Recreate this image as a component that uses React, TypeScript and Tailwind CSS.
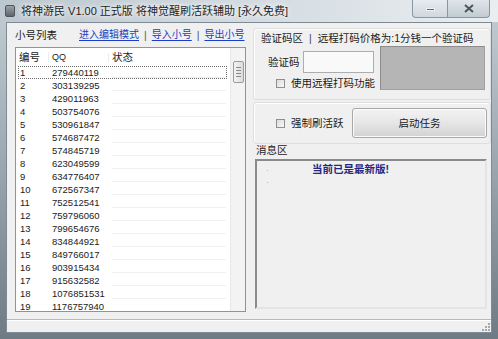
import React from 'react';

const rows: [number, string][] = [
    [1, '279440119'],
    [2, '303139295'],
    [3, '429011963'],
    [4, '503754076'],
    [5, '530961847'],
    [6, '574687472'],
    [7, '574845719'],
    [8, '623049599'],
    [9, '634776407'],
    [10, '672567347'],
    [11, '752512541'],
    [12, '759796060'],
    [13, '799654676'],
    [14, '834844921'],
    [15, '849766017'],
    [16, '903915434'],
    [17, '915632582'],
    [18, '1076851531'],
    [19, '1176757940'],
];

function CheckBox({ label }: { label: string }) {
    return (
        <div className="flex items-center gap-[6px]">
            <span className="w-[9px] h-[9px] border border-[#8f8f8f] bg-gradient-to-br from-[#dcdcdc] to-[#f8f8f8]" />
            <span>{label}</span>
        </div>
    );
}

export default function App() {
    return (
        <div className="w-[498px] h-[339px] flex flex-col bg-gradient-to-b from-[#c3cdd4] via-[#9aa6ae] to-[#6f7b84] font-['Liberation_Sans','Noto_Sans_CJK_SC',sans-serif] text-[10.5px] leading-none text-[#1b1b1b] overflow-hidden">
            {/* title bar */}
            <div className="h-[22px] flex items-start bg-gradient-to-r from-[#bcc7cf] via-[#d3dbe0] to-[#e9eef1]">
                <div className="mt-[5px] ml-[5px] w-[10px] h-[12px] rounded-[2px] bg-gradient-to-b from-[#9aa2a8] to-[#5e666c] border border-[#4f565b]" />
                <div className="mt-[6px] ml-[6px] text-[11px] text-[#1e1e1e] [text-shadow:0_0_4px_#ffffff,0_0_6px_#ffffff]">
                    将神游民 V1.00 正式版 将神觉醒刷活跃辅助 [永久免费]
                </div>
                <div className="ml-auto mr-[8px] flex">
                    <div className="w-[36px] h-[18px] flex items-center justify-center border border-t-0 border-[#8a96a0] rounded-bl-[4px] bg-gradient-to-b from-[#e6ecf0] to-[#cfd8de]">
                        <span className="mt-[2px] w-[9px] h-[3px] bg-[#5a646c] border border-[#eef2f4]" />
                    </div>
                    <div className="w-[42px] h-[18px] flex items-center justify-center border border-t-0 border-l-0 border-[#8a96a0] rounded-br-[4px] bg-gradient-to-b from-[#dfe5ea] to-[#c3ccd3]">
                        <svg width="10" height="9" viewBox="0 0 10 9">
                            <path d="M1 1 L9 8 M9 1 L1 8" stroke="#4d565d" strokeWidth="2" />
                        </svg>
                    </div>
                </div>
            </div>

            {/* client area */}
            <div className="flex-1 mx-[6px] mb-[6px] bg-[#f0f0f0] border border-[#7f8b94] flex flex-col">
                <div className="h-[296px] flex">
                    {/* left column */}
                    <div className="ml-[8px] w-[231px] flex flex-col">
                        <div className="h-[24px] flex items-center whitespace-nowrap">
                            <span className="shrink-0">小号列表</span>
                            <span className="shrink-0 ml-[22px] text-[10px] text-[#1b3cc4] underline underline-offset-2">进入编辑模式</span>
                            <span className="shrink-0 mx-[5px] text-[#555]">|</span>
                            <span className="shrink-0 text-[10px] text-[#1b3cc4] underline underline-offset-2">导入小号</span>
                            <span className="shrink-0 mx-[5px] text-[#555]">|</span>
                            <span className="shrink-0 text-[10px] text-[#1b3cc4] underline underline-offset-2">导出小号</span>
                        </div>
                        <div className="h-[265px] border border-[#8e949c] bg-white flex overflow-hidden">
                            <div className="flex-1 flex flex-col overflow-hidden">
                                <div className="h-[18px] shrink-0 flex items-center">
                                    <div className="w-[33px] pl-[3px] border-r border-[#ececec]">编号</div>
                                    <div className="w-[60px] pl-[3px] text-[9px] border-r border-[#ececec]">QQ</div>
                                    <div className="pl-[3px]">状态</div>
                                </div>
                                {rows.map(([n, qq]) => (
                                    <div
                                        key={n}
                                        className={`h-[13px] shrink-0 flex items-center text-[9.5px] ml-[2px] mr-[3px] ${n === 1 ? 'border border-dotted border-[#6a6a6a]' : 'border border-transparent'}`}
                                    >
                                        <div className="w-[30px] pl-[1px]">{n}</div>
                                        <div className="w-[60px] pl-[3px]">{qq}</div>
                                        <div className="flex-1 self-stretch ml-[3px] border-b border-[#f1f1f1]" />
                                    </div>
                                ))}
                            </div>
                            {/* scrollbar */}
                            <div className="w-[15px] bg-[#f3f3f3] border-l border-[#e8e8e8] pt-[13px] flex justify-center">
                                <div className="w-[11px] h-[22px] rounded-[2px] border border-[#9b9b9b] bg-gradient-to-r from-[#f3f3f3] to-[#dcdcdc] flex flex-col items-center justify-center gap-[2px]">
                                    <span className="w-[5px] h-px bg-[#8a8a8a]" />
                                    <span className="w-[5px] h-px bg-[#8a8a8a]" />
                                    <span className="w-[5px] h-px bg-[#8a8a8a]" />
                                    <span className="w-[5px] h-px bg-[#8a8a8a]" />
                                </div>
                            </div>
                        </div>
                    </div>

                    {/* right column */}
                    <div className="ml-[7px] w-[238px] flex flex-col">
                        <div className="mt-[5px] h-[72px] rounded-[3px] border border-[#dedede] shadow-[inset_1px_1px_0_#ffffff] flex flex-col">
                            <div className="h-[18px] flex items-center pl-[7px]">
                                验证码区 <span className="mx-[6px] text-[#444]">|</span> 远程打码价格为:1分钱一个验证码
                            </div>
                            <div className="flex">
                                <div className="flex flex-col">
                                    <div className="mt-[4px] flex items-center">
                                        <span className="ml-[14px] w-[35px]">验证码</span>
                                        <div className="w-[71px] h-[22px] bg-[#f9f9f9] border border-[#abadb3]" />
                                    </div>
                                    <div className="mt-[4px] ml-[22px] h-[12px] flex items-center">
                                        <CheckBox label="使用远程打码功能" />
                                    </div>
                                </div>
                                <div className="ml-[5px] -mt-[1px] w-[105px] h-[44px] bg-[#b5b5b5] border border-[#a0a0a0] border-t-[#8c8c8c] border-l-[#8c8c8c]" />
                            </div>
                        </div>
                        <div className="mt-[2px] h-[42px] rounded-[3px] border border-[#dedede] shadow-[inset_1px_1px_0_#ffffff] flex items-center">
                            <div className="ml-[22px]">
                                <CheckBox label="强制刷活跃" />
                            </div>
                            <div className="ml-auto mr-[3px] w-[135px] h-[30px] rounded-[3px] border border-[#a7a7a7] bg-gradient-to-b from-[#f3f3f3] via-[#e6e6e6] to-[#d2d2d2] shadow-[inset_0_0_0_1px_#fbfbfb] flex items-center justify-center">
                                启动任务
                            </div>
                        </div>
                        <div className="h-[13px] flex items-center pl-[3px]">消息区</div>
                        <div className="mt-[2px] ml-[2px] w-[232px] h-[150px] border-2 border-t-[#8a8a8a] border-l-[#8a8a8a] border-r-[#e4e4e4] border-b-[#e4e4e4] bg-[#f0f0f0] relative">
                            <div className="pt-[3px] pl-[55px] font-bold text-[#25267f]">当前已是最新版!</div>
                            <span className="absolute left-[10px] top-[9px] w-px h-px bg-[#9fcf9f]" />
                            <span className="absolute left-[10px] top-[21px] w-px h-px bg-[#9fcf9f]" />
                        </div>
                    </div>
                </div>

                {/* status bar */}
                <div className="flex-1 border-t border-[#b9b9b9] shadow-[inset_0_1px_0_#ffffff] flex items-end justify-end">
                    <svg width="8" height="8" viewBox="0 0 8 8" className="mb-px mr-px">
                        <rect x="6" y="0" width="2" height="2" fill="#a8a8a8" />
                        <rect x="3" y="3" width="2" height="2" fill="#a8a8a8" />
                        <rect x="6" y="3" width="2" height="2" fill="#a8a8a8" />
                        <rect x="0" y="6" width="2" height="2" fill="#a8a8a8" />
                        <rect x="3" y="6" width="2" height="2" fill="#a8a8a8" />
                        <rect x="6" y="6" width="2" height="2" fill="#a8a8a8" />
                    </svg>
                </div>
            </div>
        </div>
    );
}
